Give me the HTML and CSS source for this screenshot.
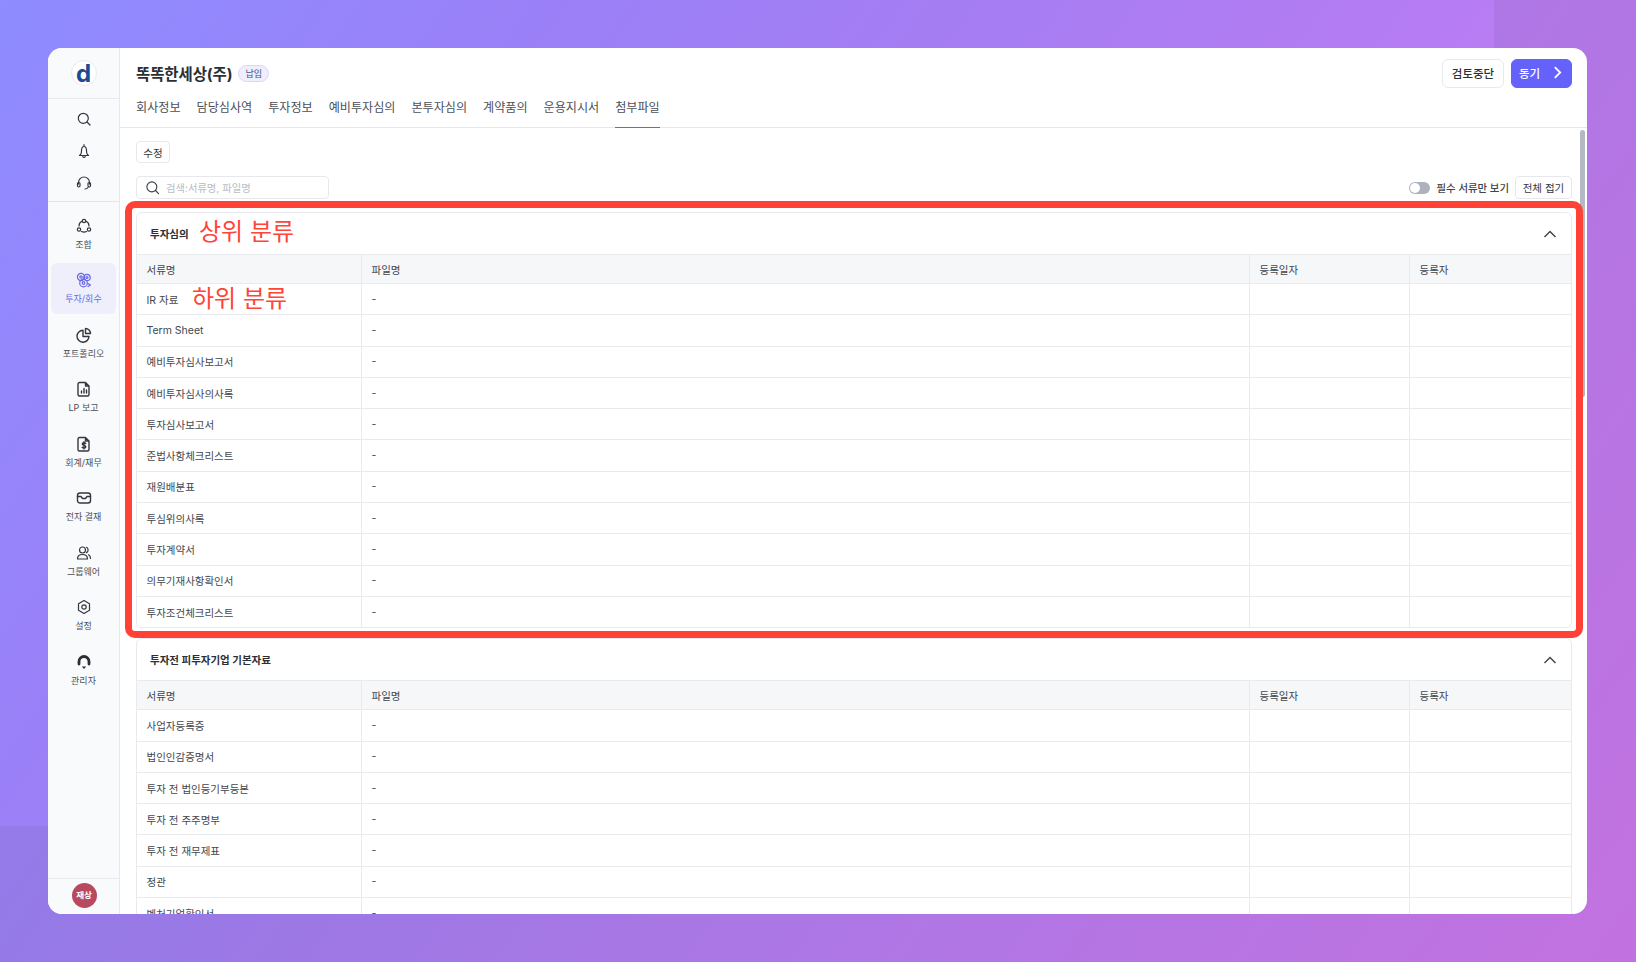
FILE: index.html
```html
<!DOCTYPE html>
<html lang="ko">
<head>
<meta charset="utf-8">
<title>첨부파일</title>
<link rel="stylesheet" href="styles.css">
</head>
<body>
<div class="square square-tr"></div>
<div class="square square-bl"></div>
<div class="window">
  <aside class="sidebar">
    <div class="logo-wrap"><div class="logo">d</div></div>
    <div class="tools">
      <svg class="ico" viewBox="0 0 16 16"><circle cx="7.3" cy="7.3" r="5"/><path d="M11 11l3 3"/></svg>
      <svg class="ico" viewBox="0 0 16 16"><path d="M8 1.500v1M4.600 11.500c.7-1 .9-2 .9-3.700C5.500 5.500 6.500 3.500 8 3.500s2.500 2 2.500 4.300c0 1.700.2 2.700.9 3.700l1.100 1h-9zM6.800 13.500c.2.700.7 1 1.200 1s1-.3 1.200-1"/></svg>
      <svg class="ico" viewBox="0 0 16 16"><path d="M2.500 9V7.500a5.500 5.500 0 0 1 11 0V9M12 12.500c-.6 1-1.800 1.500-3 1.500"/><rect x="1.500" y="7.500" width="2.500" height="4.500" rx="1.200"/><rect x="12" y="7.500" width="2.500" height="4.500" rx="1.200"/></svg>
    </div>
    <nav class="nav">
      <a class="nav-item"><svg class="ico" viewBox="0 0 16 16"><circle cx="8" cy="3" r="1.700"/><circle cx="3" cy="11.500" r="1.700"/><circle cx="13" cy="11.500" r="1.700"/><path d="M5.800 3.300C4 4.200 3 6 3 8M13 8c0-2-1-3.800-2.800-4.700M5.500 13.500c1.600.7 3.400.7 5 0"/></svg><span>조합</span></a>
      <a class="nav-item is-active"><svg class="ico" viewBox="0 0 16 16"><circle cx="5" cy="5" r="3.600"/><circle cx="5" cy="5" r="1.200"/><circle cx="11" cy="5.500" r="3.200"/><circle cx="11" cy="5.500" r="1"/><circle cx="7.500" cy="11" r="3.800"/><circle cx="7.500" cy="11" r="1.300"/><path d="M12 11.500l2.500 1.500-2.500 1.500"/></svg><span>투자/회수</span></a>
      <a class="nav-item"><svg class="ico ico-bold" viewBox="0 0 16 16"><path d="M7 3.200a6 6 0 1 0 6 6.300H7z"/><path d="M9.500 1.500a5 5 0 0 1 5 5h-5z"/></svg><span>포트폴리오</span></a>
      <a class="nav-item"><svg class="ico ico-bold" viewBox="0 0 16 16"><path d="M3.500 1.500h6l3.500 3.500v8.500a1.500 1.500 0 0 1-1.500 1.500h-8a1.500 1.500 0 0 1-1.500-1.500V3a1.500 1.500 0 0 1 1.500-1.500zM9.500 1.500V5H13M5.500 12V10M8 12V7.500M10.500 12V9"/></svg><span>LP 보고</span></a>
      <a class="nav-item"><svg class="ico ico-bold" viewBox="0 0 16 16"><path d="M3.500 1.500h6l3.500 3.500v8.500a1.500 1.500 0 0 1-1.500 1.500h-8a1.500 1.500 0 0 1-1.500-1.500V3a1.500 1.500 0 0 1 1.500-1.500zM9.500 1.500V5H13M9.700 7.500C9.300 7 8.700 6.800 8 6.800c-1 0-1.700.5-1.700 1.300 0 1.700 3.500.9 3.500 2.600 0 .8-.8 1.300-1.800 1.300-.8 0-1.400-.3-1.800-.8M8 5.800v7.200"/></svg><span>회계/재무</span></a>
      <a class="nav-item"><svg class="ico ico-bold" viewBox="0 0 16 16"><rect x="1.500" y="3" width="13" height="10" rx="2.500"/><path d="M1.500 6.500h3.500l1.500 2h3l1.500-2h3.500"/></svg><span>전자 결재</span></a>
      <a class="nav-item"><svg class="ico" viewBox="0 0 16 16"><circle cx="6.500" cy="5" r="3"/><path d="M1.500 14c0-3 2-4.500 5-4.500s5 1.500 5 4.500zM10.500 2.300a3 3 0 0 1 0 5.300M12.500 9.800c1.300.6 2 1.900 2 3.700"/></svg><span>그룹웨어</span></a>
      <a class="nav-item"><svg class="ico" viewBox="0 0 16 16"><path d="M8 1.500l5.500 3.200v6.600L8 14.500l-5.500-3.200V4.700z"/><circle cx="8" cy="8" r="2.200"/></svg><span>설정</span></a>
      <a class="nav-item"><svg class="ico ico-heavy" viewBox="0 0 16 16"><path d="M3 10V7.500a5 5 0 0 1 10 0V10"/><path class="ico-fill" d="M5.800 12.500h4.400L8 15z"/></svg><span>관리자</span></a>
    </nav>
    <div class="user"><div class="avatar">재상</div></div>
  </aside>
  <main class="main">
    <header class="head">
      <div class="head-top">
        <div class="company"><h1>똑똑한세상(주)</h1><span class="badge">납입</span></div>
        <div class="actions">
          <button class="btn">검토중단</button>
          <button class="btn btn-primary">동기<svg viewBox="0 0 12 12"><path d="M3.500 1L8.500 6l-5 5"/></svg></button>
        </div>
      </div>
      <div class="tabs">
        <a>회사정보</a><a>담당심사역</a><a>투자정보</a><a>예비투자심의</a><a>본투자심의</a><a>계약품의</a><a>운용지시서</a><a class="is-active">첨부파일</a>
      </div>
    </header>
    <section class="content">
      <button class="btn-sm btn-edit">수정</button>
      <div class="toolbar">
        <label class="search"><svg viewBox="0 0 16 16"><circle cx="7.300" cy="7.300" r="5.300"/><path d="M11.200 11.200l3.300 3.300"/></svg><span>검색:서류명, 파일명</span></label>
        <div class="toolbar-right">
          <span class="toggle"></span>
          <span class="toggle-label">필수 서류만 보기</span>
          <button class="btn-sm btn-fold">전체 접기</button>
        </div>
      </div>
      <article class="card">
        <div class="card-head"><h2>투자심의</h2><svg class="chev" viewBox="0 0 14 14"><path d="M1.500 10L7 4.500 12.500 10"/></svg></div>
        <div class="row row-head"><div>서류명</div><div>파일명</div><div>등록일자</div><div>등록자</div></div>
        <div class="row"><div>IR 자료</div><div>-</div><div></div><div></div></div>
        <div class="row"><div>Term Sheet</div><div>-</div><div></div><div></div></div>
        <div class="row"><div>예비투자심사보고서</div><div>-</div><div></div><div></div></div>
        <div class="row"><div>예비투자심사의사록</div><div>-</div><div></div><div></div></div>
        <div class="row"><div>투자심사보고서</div><div>-</div><div></div><div></div></div>
        <div class="row"><div>준법사항체크리스트</div><div>-</div><div></div><div></div></div>
        <div class="row"><div>재원배분표</div><div>-</div><div></div><div></div></div>
        <div class="row"><div>투심위의사록</div><div>-</div><div></div><div></div></div>
        <div class="row"><div>투자계약서</div><div>-</div><div></div><div></div></div>
        <div class="row"><div>의무기재사항확인서</div><div>-</div><div></div><div></div></div>
        <div class="row"><div>투자조건체크리스트</div><div>-</div><div></div><div></div></div>
      </article>
      <article class="card">
        <div class="card-head"><h2>투자전 피투자기업 기본자료</h2><svg class="chev" viewBox="0 0 14 14"><path d="M1.500 10L7 4.500 12.500 10"/></svg></div>
        <div class="row row-head"><div>서류명</div><div>파일명</div><div>등록일자</div><div>등록자</div></div>
        <div class="row"><div>사업자등록증</div><div>-</div><div></div><div></div></div>
        <div class="row"><div>법인인감증명서</div><div>-</div><div></div><div></div></div>
        <div class="row"><div>투자 전 법인등기부등본</div><div>-</div><div></div><div></div></div>
        <div class="row"><div>투자 전 주주명부</div><div>-</div><div></div><div></div></div>
        <div class="row"><div>투자 전 재무제표</div><div>-</div><div></div><div></div></div>
        <div class="row"><div>정관</div><div>-</div><div></div><div></div></div>
        <div class="row"><div>벤처기업확인서</div><div>-</div><div></div><div></div></div>
      </article>
      <div class="scrollbar"></div>
      <div class="mark-box"></div>
      <span class="mark-text mark-upper">상위 분류</span>
      <span class="mark-text mark-lower">하위 분류</span>
    </section>
  </main>
</div>
</body>
</html>
```
FILE: styles.css
```css
* { box-sizing: border-box; }
html, body { height: 100%; }
body {
  margin: 0;
  padding: 48px 49px 48px 48px;
  overflow: hidden;
  position: relative;
  background: linear-gradient(125deg, #8e8cff 0%, #9a80f8 24%, #a57df2 42%, #b87cf3 65%, #cd77ee 100%);
  font-family: Inter, "Noto Sans CJK KR", sans-serif;
  color: #33373d;
}
.square { position: absolute; background: rgba(70, 60, 60, .08); }
.square-tr { right: 0; top: 0; width: 142px; height: 100%; }
.square-bl { left: 0; bottom: 0; width: 1494px; height: 136px; }
.window {
  position: relative;
  display: flex;
  height: 866px;
  background: #fff;
  border-radius: 14px;
  overflow: hidden;
}
.sidebar {
  flex: 0 0 72px;
  display: flex;
  flex-direction: column;
  background: #f9fafc;
  border-right: 1px solid #e6e8ee;
}
.logo-wrap { height: 51px; display: flex; align-items: center; justify-content: center; border-bottom: 1px solid #e8eaef; }
.logo {
  width: 26px; height: 26px; border-radius: 50%;
  background: #fff; border: 1px solid #e9ebf1;
  color: #1c4a94; font: 700 24px/25px Inter, sans-serif; text-align: center;
}
.tools {
  height: 103px; padding-top: 12px;
  display: flex; flex-direction: column; align-items: center; gap: 16px;
  border-bottom: 1px solid #e3e5ea;
}
.ico { width: 16px; height: 16px; fill: none; stroke: #33373d; stroke-width: 1.200; stroke-linecap: round; stroke-linejoin: round; flex: none; }
.ico-bold { stroke-width: 1.400; }
.ico-heavy { stroke: #2b2e33; stroke-width: 2.800; }
.ico-fill { fill: #2b2e33; stroke: none; }
.nav { flex: 1; padding: 6px 3px 0; display: flex; flex-direction: column; gap: 3.500px; }
.nav-item {
  height: 51px; border-radius: 6px; padding-top: 1px;
  display: flex; flex-direction: column; align-items: center; justify-content: center; gap: 5px;
  font-size: 9px; line-height: 12px; color: #4b4f57;
}
.nav-item.is-active { background: #eeeffb; color: #6a67e6; }
.nav-item.is-active .ico { stroke: #6a67e6; }
.user { height: 36px; border-top: 1px solid #e8eaef; display: flex; justify-content: center; padding: 4px 0 0 1px; }
.avatar {
  width: 25px; height: 25px; border-radius: 50%; background: #b84a5f; color: #fff;
  font-size: 8.500px; font-weight: 700; line-height: 25px; text-align: center;
}
.main { flex: 1; min-width: 0; display: flex; flex-direction: column; }
.head { height: 80px; padding: 0 15px 0 16px; border-bottom: 1px solid #e6e8ec; }
.head-top { display: flex; align-items: flex-start; justify-content: space-between; height: 47px; padding-top: 11px; }
.company { display: flex; align-items: center; gap: 6px; height: 28px; }
.company h1 { margin: 0; font-size: 15.500px; font-weight: 700; color: #2c2f34; letter-spacing: -.1px; }
.badge {
  height: 17px; padding: 0 6px; border-radius: 9px;
  background: #eeeefc; border: 1px solid #d8d8f3; color: #4b4b85;
  font-size: 9px; line-height: 15px;
}
.actions { display: flex; gap: 7px; }
.btn {
  height: 29px; width: 62px; padding: 0 0 2px; border: 1px solid #e8eaee; border-radius: 6px; background: #fff;
  font: 500 11.500px "Noto Sans CJK KR", sans-serif; color: #2c2f34;
}
.btn-primary {
  width: 61px; background: #6462fb; border-color: #6462fb; color: #fff;
  display: flex; align-items: center; justify-content: center; gap: 11px;
}
.btn-primary svg { width: 13px; height: 13px; fill: none; stroke: #fff; stroke-width: 1.700; }
.tabs { display: flex; gap: 16px; height: 32px; }
.tabs a { font-size: 12.100px; line-height: 26px; height: 33px; color: #4b4f57; }
.tabs a.is-active { border-bottom: 1.500px solid #6f66c9; }
.content {
  position: relative; flex: 1; min-height: 0; overflow: hidden;
  padding: 13px 15px 0 16px;
  display: flex; flex-direction: column; align-items: stretch;
}
.btn-sm {
  padding: 0; border: 1px solid #e6e8ec; border-radius: 4px; background: #fff;
  font: 400 10.500px "Noto Sans CJK KR", sans-serif; color: #33373d;
}
.btn-edit { align-self: flex-start; width: 34px; height: 22px; flex: none; }
.toolbar { display: flex; justify-content: space-between; align-items: center; height: 23px; margin: 13px 0; flex: none; }
.search {
  width: 193px; height: 23px; border: 1px solid #e6e8ec; border-radius: 4px;
  display: flex; align-items: center; gap: 6px; padding-left: 8px;
  font-size: 10.300px; color: #b8bcc4;
}
.search svg { width: 15px; height: 15px; fill: none; stroke: #3b3f45; stroke-width: 1.200; stroke-linecap: round; }
.toolbar-right { display: flex; align-items: center; }
.toggle { width: 21px; height: 12px; border-radius: 6px; background: #adb3bd; position: relative; margin-right: 7px; }
.toggle::before { content: ""; position: absolute; left: 1px; top: 1px; width: 10px; height: 10px; border-radius: 50%; background: #fff; }
.toggle-label { font-size: 10.400px; font-weight: 500; margin-right: 6px; color: #3f434a; }
.btn-fold { width: 57px; height: 23px; }
.card { flex: none; border: 1px solid #e8eaee; border-radius: 6px; margin-bottom: 10px; overflow: hidden; background: #fff; }
.card-head { height: 41px; padding: 0 13px; display: flex; align-items: center; justify-content: space-between; }
.card-head h2 { margin: 0; font-size: 10.500px; font-weight: 700; color: #2c2f34; }
.chev { width: 14px; height: 14px; fill: none; stroke: #44484e; stroke-width: 1.500; margin-right: 1px; }
.row {
  display: grid; grid-template-columns: 224px 888px 160px 1fr;
  height: 31.300px; border-top: 1px solid #e8eaee;
  font-size: 10.500px; color: #43474e;
}
.row > div { display: flex; align-items: center; padding-left: 9.500px; border-left: 1px solid #e8eaee; }
.row > div:first-child { border-left: 0; }
.row-head { height: 29px; background: #f6f7f9; }
.scrollbar { position: absolute; right: 2px; top: 2px; width: 5px; height: 267px; border-radius: 3px; background: #b4b8c2; }
.mark-box {
  position: absolute; left: 5px; top: 73px; width: 1458px; height: 437px;
  border: 7px solid #ff4136; border-radius: 10px;
}
.mark-text { position: absolute; font-size: 24px; line-height: 30px; color: #ff4438; font-family: "Noto Sans CJK KR", sans-serif; }
.mark-upper { left: 79px; top: 87px; }
.mark-lower { left: 72px; top: 154px; }
```
